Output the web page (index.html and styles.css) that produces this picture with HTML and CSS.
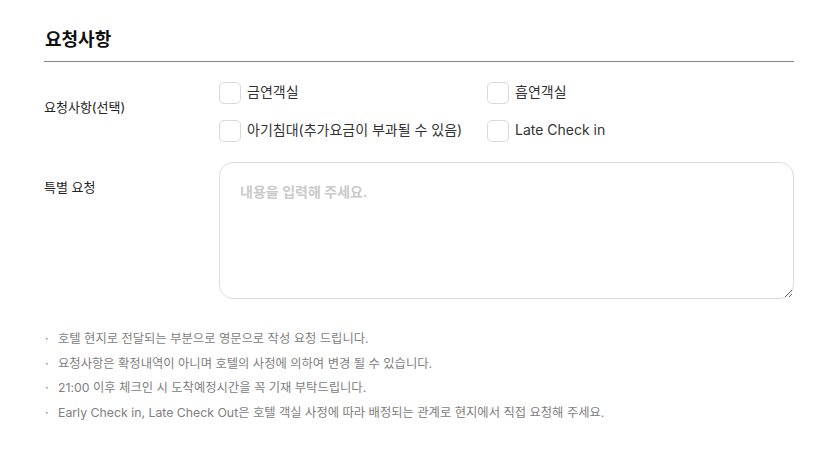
FILE: index.html
```html
<!DOCTYPE html>
<html lang="ko">
<head>
<meta charset="utf-8">
<link rel="stylesheet" href="styles.css">
</head>
<body>
<section class="request">
  <h2 class="title">요청사항</h2>
  <div class="row row-options">
    <div class="label label-options">요청사항(선택)</div>
    <div class="options">
      <label class="opt"><span class="box"></span><span class="opt-text">금연객실</span></label>
      <label class="opt"><span class="box"></span><span class="opt-text">흡연객실</span></label>
      <label class="opt"><span class="box"></span><span class="opt-text">아기침대(추가요금이 부과될 수 있음)</span></label>
      <label class="opt"><span class="box"></span><span class="opt-text">Late Check in</span></label>
    </div>
  </div>
  <div class="row row-special">
    <div class="label label-special">특별 요청</div>
    <textarea class="special" placeholder="내용을 입력해 주세요."></textarea>
  </div>
  <ul class="notes">
    <li>호텔 현지로 전달되는 부분으로 영문으로 작성 요청 드립니다.</li>
    <li>요청사항은 확정내역이 아니며 호텔의 사정에 의하여 변경 될 수 있습니다.</li>
    <li>21:00 이후 체크인 시 도착예정시간을 꼭 기재 부탁드립니다.</li>
    <li>Early Check in, Late Check Out은 호텔 객실 사정에 따라 배정되는 관계로 현지에서 직접 요청해 주세요.</li>
  </ul>
</section>
</body>
</html>
```
FILE: styles.css
```css
* { box-sizing: border-box; }
html, body { margin: 0; padding: 0; background: #fff; }
body {
  font-family: Inter, "Noto Sans CJK KR", sans-serif;
  color: #222;
}
.request {
  width: 750px;
  margin: 0 0 0 44px;
  padding-top: 27px;
}
.title {
  margin: 0;
  font-size: 18px;
  font-weight: 700;
  line-height: 26px;
  color: #111;
  padding-left: 1px;
  padding-bottom: 8px;
  border-bottom: 1px solid #858585;
}
.row {
  display: flex;
}
.label {
  width: 175px;
  flex: none;
  font-size: 13px;
  line-height: 20px;
  color: #222;
}
.row-options {
  padding-top: 20px;
}
.label-options { padding-top: 15px; }
.options {
  display: grid;
  grid-template-columns: 268px 1fr;
  row-gap: 16px;
}
.opt {
  display: flex;
  align-items: center;
  gap: 6px;
  height: 22px;
  font-size: 14px;
  color: #333;
  cursor: pointer;
}
.box {
  width: 22px;
  height: 22px;
  border: 1px solid #d9d9d9;
  border-radius: 5px;
  background: #fff;
  flex: none;
}
.opt-text { position: relative; top: -2px; }
.row-special {
  margin-top: 20px;
}
.label-special { padding-top: 15px; }
.special {
  display: block;
  width: 575px;
  height: 137px;
  border: 1px solid #dcdcdc;
  border-radius: 14px;
  padding: 20px 20px;
  font-family: Inter, "Noto Sans CJK KR", sans-serif;
  font-size: 14px;
  font-weight: 600;
  line-height: 18px;
  color: #333;
  outline: none;
  resize: both;
}
.special::placeholder { color: #cacaca; }
.notes {
  list-style: none;
  margin: 28px 0 0;
  padding: 0;
}
.notes li {
  position: relative;
  padding-left: 14px;
  font-size: 12.3px;
  line-height: 24.5px;
  color: #808080;
}
.notes li::before {
  content: "·";
  position: absolute;
  left: 1px;
  top: 0;
}
```
